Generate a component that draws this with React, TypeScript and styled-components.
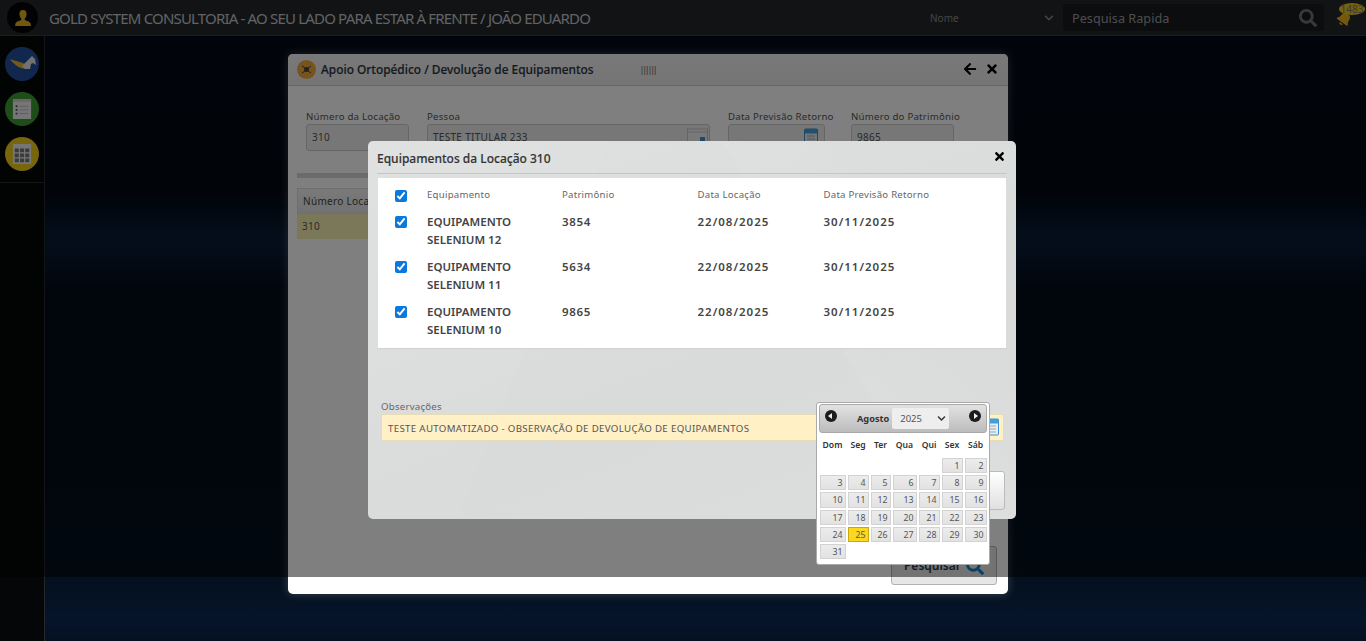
import React from "react";
import styled, { createGlobalStyle } from "styled-components";
import { FaArrowLeft, FaBell, FaChevronDown, FaSearch, FaTimes } from "react-icons/fa";

const Global = createGlobalStyle`
  html, body { margin: 0; padding: 0; background: #02060e; overflow: hidden; }
  * { box-sizing: border-box; }
  body { font-family: "Noto Sans", "Open Sans", sans-serif; }
`;

const Page = styled.div`
  position: relative;
  width: 1366px;
  height: 641px;
  overflow: hidden;
  display: flex;
  flex-direction: column;
  background: linear-gradient(
    180deg,
    #030a16 0px,
    #020812 190px,
    #071c36 240px,
    #030c1a 290px,
    #030c1a 480px,
    #04101e 577px,
    #06142a 620px,
    #051022 641px
  );
`;

const Header = styled.header`
  height: 36px;
  flex: none;
  display: flex;
  align-items: center;
  background: #24262a;
  border-bottom: 1px solid #3a3c40;
  color: #b8bcc0;
`;

const Avatar = styled.div`
  width: 31px;
  height: 31px;
  margin-left: 7px;
  border-radius: 50%;
  background: #050505;
  display: flex;
  align-items: center;
  justify-content: center;
`;

const Brand = styled.div`
  margin-left: 11px;
  font-size: 15px;
  letter-spacing: -0.82px;
  white-space: nowrap;
  color: #c2c6ca;
`;

const SearchType = styled.div`
  margin-left: auto;
  width: 131px;
  display: flex;
  align-items: center;
  justify-content: space-between;
  font-size: 10px;
  color: #8a8e92;
  padding-right: 7px;
  svg { color: #80848a; font-size: 10px; }
`;

const QuickSearch = styled.div`
  width: 261px;
  height: 27px;
  margin-left: 2px;
  border-radius: 3px;
  background: #181a1d;
  display: flex;
  align-items: center;
  justify-content: space-between;
  padding: 0 7px 0 9px;
  font-size: 12.7px;
  color: #989ca0;
  svg { font-size: 18px; color: #6e7276; }
`;

const BellBox = styled.div`
  position: relative;
  width: 42px;
  height: 36px;
  flex: none;
`;

const BellGlyph = styled(FaBell)`
  position: absolute;
  left: 13px;
  top: 11px;
  font-size: 15px;
  color: #e8b020;
  transform: rotate(35deg);
`;

const BellBadge = styled.span`
  position: absolute;
  left: 15px;
  top: 3px;
  width: 26px;
  height: 12px;
  border-radius: 50%;
  background: #e6c41c;
  color: #777;
  font-size: 10px;
  line-height: 12px;
  text-align: center;
  overflow: hidden;
`;

const Body = styled.div`
  flex: 1;
  display: flex;
  min-height: 0;
`;

const Sidebar = styled.nav`
  width: 45px;
  flex: none;
  background: #050607;
  border-right: 1px solid #26282a;
`;

const SideIcons = styled.div`
  display: flex;
  flex-direction: column;
  gap: 11px;
  padding: 11px 0 11px 5px;
  border-bottom: 1px solid #2a2c2e;
  height: 147px;
`;

const SideIcon = styled.div<{ $bg: string }>`
  width: 34px;
  height: 34px;
  border-radius: 50%;
  background: ${(p) => p.$bg};
  display: flex;
  align-items: center;
  justify-content: center;
`;

const Main = styled.main`
  flex: 1;
  padding: 18px 0 0 243px;
`;

const Modal = styled.section`
  position: relative;
  width: 720px;
  height: 540px;
  background: #fff;
  border-radius: 5px;
  box-shadow: 0 0 10px rgba(255, 255, 255, 0.22);
  overflow: hidden;
`;

const ModalHead = styled.div`
  height: 32px;
  display: flex;
  align-items: center;
  padding: 0 9px 1px;
  background: linear-gradient(#f2f2f2, #eaeaea);
  border-bottom: 1px solid #cfcfcf;
`;

const OrthoBadge = styled.div`
  width: 19px;
  height: 19px;
  border-radius: 50%;
  background: #f0a83a;
  display: flex;
  align-items: center;
  justify-content: center;
`;

const ModalTitle = styled.h1`
  margin: 0 0 0 5px;
  font-size: 11.9px;
  font-weight: 500;
  color: #2b3240;
  -webkit-text-stroke: 0.15px #2b3240;
`;

const Bars = styled.span`
  margin-left: 46px;
  font-size: 9px;
  letter-spacing: -2.3px;
  color: #666;
`;

const HeadActions = styled.div`
  margin-left: auto;
  display: flex;
  align-items: center;
  gap: 8px;
  color: #000;
  font-size: 14px;
  svg { display: block; }
`;

const FormRow = styled.div`
  display: flex;
  padding: 24px 0 0 18px;
`;

const Field = styled.div<{ $w: number; $gap: number }>`
  width: ${(p) => p.$w}px;
  margin-right: ${(p) => p.$gap}px;
`;

const FieldLabel = styled.label`
  display: block;
  font-size: 9.7px;
  line-height: 14px;
  letter-spacing: 0.2px;
  color: #555;
  white-space: nowrap;
`;

const FieldBox = styled.div`
  position: relative;
  height: 27px;
  border: 1px solid #ccc;
  border-radius: 3px;
  background: #eee;
  font-size: 10px;
  line-height: 25px;
  letter-spacing: 0.3px;
  padding-left: 5px;
  color: #555;
`;

const FieldIcon = styled.span<{ $right: number }>`
  position: absolute;
  right: ${(p) => p.$right}px;
  top: 3px;
`;

const Divider = styled.div`
  height: 5px;
  margin: 22px 9px 0;
  background: #d6d6d6;
`;

const GridHead = styled.div`
  margin: 10px 0 0 9px;
  height: 26px;
  width: 110px;
  border: 1px solid #ddd;
  background: linear-gradient(#f4f4f4, #e4e4e4);
  font-size: 10px;
  line-height: 24px;
  letter-spacing: 0.3px;
  padding-left: 5px;
  color: #444;
`;

const GridRow = styled.div`
  margin-left: 9px;
  height: 25px;
  width: 640px;
  background: #f6f1b2;
  font-size: 10px;
  line-height: 25px;
  letter-spacing: 0.3px;
  padding-left: 5px;
  color: #555;
`;

const SearchButton = styled.button`
  position: absolute;
  left: 603px;
  top: 492px;
  width: 106px;
  height: 39px;
  border: 1px solid #b0b0b0;
  border-radius: 3px;
  background: #e6e6e6;
  display: flex;
  align-items: center;
  justify-content: center;
  gap: 5px;
  padding-left: 6px;
  font: 600 12px "Noto Sans", sans-serif;
  color: #2a3a50;
  svg { color: #1a7fc8; font-size: 18px; }
`;

const Backdrop = styled.div`
  position: absolute;
  left: 0;
  top: 0;
  width: 100%;
  height: 577px;
  background: rgba(0, 0, 0, 0.5);
`;

const Dialog = styled.section`
  position: absolute;
  left: 368px;
  top: 141px;
  width: 648px;
  height: 378px;
  border-radius: 5px;
  padding: 0 9px 0 9px;
  background:
    linear-gradient(112deg, rgba(255, 255, 255, 0.04) 30%, transparent 30.2%),
    linear-gradient(60deg, transparent 66%, rgba(255, 255, 255, 0.05) 66.2%, transparent 82%),
    linear-gradient(160deg, #dfe1e1, #d9dbdb 60%, #dcdede);
`;

const DialogHead = styled.div`
  height: 33px;
  display: flex;
  align-items: center;
  justify-content: space-between;
  border-bottom: 1px solid #c4c6c6;
  svg { color: #000; font-size: 13px; margin: -2px 1px 0 0; display: block; }
`;

const DialogTitle = styled.h2`
  margin: 2px 0 0;
  font-size: 12px;
  font-weight: 500;
  color: #333;
  -webkit-text-stroke: 0.15px #333;
`;

const Panel = styled.div`
  margin: 4px 1px 0 1px;
  height: 171px;
  background: #fff;
  border-bottom: 1px solid #d0d2d2;
  padding-top: 8px;
`;

const Row = styled.div<{ $head?: boolean }>`
  display: grid;
  grid-template-columns: 49px 135px 135.5px 126px 1fr;
  height: ${(p) => (p.$head ? "27px" : "45px")};
  font-size: ${(p) => (p.$head ? "9.6px" : "11.5px")};
  letter-spacing: ${(p) => (p.$head ? "0.25px" : "0")};
  line-height: 18px;
  font-weight: ${(p) => (p.$head ? 400 : 600)};
  color: ${(p) => (p.$head ? "#666" : "#444")};
`;

const Numeric = styled.span<{ $spacing: number }>`
  letter-spacing: ${(p) => p.$spacing}px;
`;

const CheckCell = styled.div<{ $head?: boolean }>`
  padding: ${(p) => (p.$head ? "4px" : "3px")} 0 0 17px;
  input {
    display: block;
    margin: 0;
    width: 12px;
    height: 12px;
    accent-color: #0a78dc;
  }
`;

const ObsBlock = styled.div`
  margin: 51px 3px 0 4px;
`;

const ObsLabel = styled.label`
  display: block;
  font-size: 9.7px;
  line-height: 14px;
  letter-spacing: 0.2px;
  color: #666;
`;

const ObsInput = styled.div`
  height: 27px;
  border: 1px solid #e6dcb8;
  border-radius: 2px;
  background: #fff0c6;
  font-size: 9.7px;
  line-height: 27px;
  letter-spacing: 0.33px;
  padding-left: 6px;
  color: #555;
`;

const ConfirmButton = styled.div`
  position: absolute;
  left: 540px;
  top: 330px;
  width: 97px;
  height: 39px;
  border: 1px solid #bbb;
  border-radius: 3px;
  background: linear-gradient(#fff, #e0e0e0);
`;

const ObsCalendar = styled.span`
  position: absolute;
  left: 617px;
  top: 277px;
`;

const Picker = styled.div`
  position: absolute;
  left: 816px;
  top: 402px;
  width: 174px;
  height: 163px;
  background: #fff;
  border: 1px solid #aaa;
  border-radius: 3px;
  padding: 1px 2px;
`;

const PickerHead = styled.div`
  position: relative;
  height: 29px;
  border: 1px solid #aaa;
  border-radius: 3px;
  background: linear-gradient(#e2e2e2, #bcbcbc);
  display: flex;
  align-items: center;
  padding-left: 37px;
  gap: 3px;
  font-size: 9.2px;
  font-weight: 700;
  color: #333;
`;

const NavDot = styled.span<{ $side: "left" | "right" }>`
  position: absolute;
  top: 5px;
  ${(p) => p.$side}: 5px;
  width: 12px;
  height: 12px;
  border-radius: 50%;
  background: #1c1c1c;
  &::after {
    content: "";
    position: absolute;
    top: 3px;
    left: ${(p) => (p.$side === "left" ? "3px" : "5px")};
    border: 3px solid transparent;
    border-left: ${(p) => (p.$side === "right" ? "4px solid #eee" : "0")};
    border-right: ${(p) => (p.$side === "left" ? "4px solid #eee" : "0")};
  }
`;

const YearSelect = styled.div`
  width: 57px;
  height: 21px;
  border-radius: 2px;
  background: #eee;
  display: flex;
  align-items: center;
  justify-content: space-between;
  padding: 0 3px 0 8px;
  font-size: 9.5px;
  font-weight: 400;
  color: #555;
  svg { font-size: 9px; color: #333; }
`;

const WeekRow = styled.div`
  display: grid;
  grid-template-columns: 26px 21px 20px 24px 21px 21px 22px;
  column-gap: 2px;
  height: 25px;
  padding-bottom: 2px;
  align-items: center;
  margin-left: 0.5px;
  font-size: 8.6px;
  font-weight: 600;
  color: #333;
  text-align: center;
`;

const DayGrid = styled.div`
  display: grid;
  grid-template-columns: 26px 21px 20px 24px 21px 21px 22px;
  grid-auto-rows: 15.2px;
  gap: 2px;
  margin-left: 0.5px;
`;

const Day = styled.span<{ $active?: boolean }>`
  border: 1px solid ${(p) => (p.$active ? "#c8a80c" : "#d3d3d3")};
  background: ${(p) => (p.$active ? "#fbd71e" : "linear-gradient(#ececec, #e2e2e2)")};
  font-size: 8.8px;
  line-height: 14px;
  text-align: right;
  padding-right: 2px;
  color: #555;
`;

const rows = [
  ["EQUIPAMENTO SELENIUM 12", "3854"],
  ["EQUIPAMENTO SELENIUM 11", "5634"],
  ["EQUIPAMENTO SELENIUM 10", "9865"],
];

const weekDays = ["Dom", "Seg", "Ter", "Qua", "Qui", "Sex", "Sáb"];

const CalendarGlyph = () => (
  <svg width="14" height="18" viewBox="0 0 14 18">
    <rect x="0.5" y="1" width="13" height="16" rx="1" fill="#e8eef2" stroke="#3b8fc8" />
    <rect x="0.5" y="1" width="13" height="4.5" fill="#3fa0dc" />
    <path d="M3 8h8M3 11h8M3 14h8" stroke="#9aa8b0" />
  </svg>
);

const LookupGlyph = () => (
  <svg width="21" height="18" viewBox="0 0 21 18">
    <rect x="0.5" y="1" width="20" height="16" fill="#f2f2f2" stroke="#c8c8c8" />
    <path d="M1 4h19" stroke="#c8c8c8" />
    <rect x="13" y="9" width="5" height="5" fill="#3f8fd0" />
  </svg>
);

const App: React.FC = () => {
  const firstOffset = 5;

  return (
    <Page>
      <Global />
      <Header>
        <Avatar>
          <svg width="16" height="18" viewBox="0 0 18 20">
            <path
              d="M9 1c3 0 4.200 2.400 4 5-.2 2-1 3.600-2 4.600v1.600c2.500 1 5.600 1.800 6.400 3.600.3.800.4 2 .4 3.200H.2c0-1.200.1-2.400.4-3.200.8-1.800 3.900-2.600 6.400-3.600v-1.600C6 9.600 5.200 8 5 6c-.2-2.600 1-5 4-5z"
              fill="#e3b023"
            />
          </svg>
        </Avatar>
        <Brand>GOLD SYSTEM CONSULTORIA - AO SEU LADO PARA ESTAR À FRENTE / JOÃO EDUARDO</Brand>
        <SearchType>
          <span>Nome</span>
          <FaChevronDown />
        </SearchType>
        <QuickSearch>
          <span>Pesquisa Rapida</span>
          <FaSearch />
        </QuickSearch>
        <BellBox>
          <BellGlyph />
          <BellBadge>1483</BellBadge>
        </BellBox>
      </Header>
      <Body>
        <Sidebar>
          <SideIcons>
            <SideIcon $bg="#244f9c">
              <svg width="34" height="34" viewBox="0 0 34 34">
                <path d="M5 12c5 2 12 3 19 7l-2 3c-7 0-13-4-17-10z" fill="#e8b42e" />
                <path d="M17 19l7-7 3-3 3 3 1 6-3-2-2 1-1 5-5 0z" fill="#e4e4e4" />
              </svg>
            </SideIcon>
            <SideIcon $bg="#3f9a34">
              <svg width="20" height="20" viewBox="0 0 20 22">
                <rect width="20" height="22" fill="#ededed" />
                <rect width="20" height="3" fill="#cfcfcf" />
                <path d="M3 7h2v2H3zM3 11h2v2H3zM3 15h2v2H3z" fill="#555" />
                <path d="M7 8h10M7 12h10M7 16h10" stroke="#bbb" />
              </svg>
            </SideIcon>
            <SideIcon $bg="#f0cc1c">
              <svg width="20" height="20" viewBox="0 0 20 22">
                <rect width="20" height="22" fill="#ededed" />
                <path
                  d="M2 5h4.500v4H2zM7.800 5h4.500v4H7.800zM13.500 5H18v4h-4.500zM2 10.500h4.500v4H2zM7.800 10.500h4.500v4H7.800zM13.500 10.500H18v4h-4.500zM2 16h4.500v4H2zM7.800 16h4.500v4H7.800zM13.500 16H18v4h-4.500z"
                  fill="#777"
                />
              </svg>
            </SideIcon>
          </SideIcons>
        </Sidebar>
        <Main>
          <Modal>
            <ModalHead>
              <OrthoBadge>
                <svg width="11" height="11" viewBox="0 0 11 11">
                  <circle cx="5.500" cy="5.500" r="2.500" fill="#444" />
                  <path d="M1 2l3 2M10 2L7 4M1 9l3-2M10 9L7 7" stroke="#444" />
                </svg>
              </OrthoBadge>
              <ModalTitle>Apoio Ortopédico / Devolução de Equipamentos</ModalTitle>
              <Bars>||||||</Bars>
              <HeadActions>
                <FaArrowLeft />
                <FaTimes />
              </HeadActions>
            </ModalHead>
            <FormRow>
              <Field $w={103} $gap={18}>
                <FieldLabel>Número da Locação</FieldLabel>
                <FieldBox>310</FieldBox>
              </Field>
              <Field $w={283} $gap={18}>
                <FieldLabel>Pessoa</FieldLabel>
                <FieldBox>
                  TESTE TITULAR 233
                  <FieldIcon $right={1}>
                    <LookupGlyph />
                  </FieldIcon>
                </FieldBox>
              </Field>
              <Field $w={97} $gap={26}>
                <FieldLabel>Data Previsão Retorno</FieldLabel>
                <FieldBox>
                  <FieldIcon $right={6}>
                    <CalendarGlyph />
                  </FieldIcon>
                </FieldBox>
              </Field>
              <Field $w={103} $gap={0}>
                <FieldLabel>Número do Patrimônio</FieldLabel>
                <FieldBox>9865</FieldBox>
              </Field>
            </FormRow>
            <Divider />
            <GridHead>Número Locação</GridHead>
            <GridRow>310</GridRow>
            <SearchButton>
              Pesquisar
              <FaSearch />
            </SearchButton>
          </Modal>
        </Main>
      </Body>
      <Backdrop />
      <Dialog>
        <DialogHead>
          <DialogTitle>Equipamentos da Locação 310</DialogTitle>
          <FaTimes />
        </DialogHead>
        <Panel>
          <Row $head>
            <CheckCell $head>
              <input type="checkbox" defaultChecked />
            </CheckCell>
            <span>Equipamento</span>
            <span>Patrimônio</span>
            <span>Data Locação</span>
            <span>Data Previsão Retorno</span>
          </Row>
          {rows.map(([name, code]) => (
            <Row key={code}>
              <CheckCell>
                <input type="checkbox" defaultChecked />
              </CheckCell>
              <span>{name}</span>
              <Numeric $spacing={0.7}>{code}</Numeric>
              <Numeric $spacing={1}>22/08/2025</Numeric>
              <Numeric $spacing={1}>30/11/2025</Numeric>
            </Row>
          ))}
        </Panel>
        <ObsBlock>
          <ObsLabel>Observações</ObsLabel>
          <ObsInput>TESTE AUTOMATIZADO - OBSERVAÇÃO DE DEVOLUÇÃO DE EQUIPAMENTOS</ObsInput>
        </ObsBlock>
        <ObsCalendar>
          <CalendarGlyph />
        </ObsCalendar>
        <ConfirmButton />
      </Dialog>
      <Picker>
        <PickerHead>
          <NavDot $side="left" />
          <span>Agosto</span>
          <YearSelect>
            2025
            <FaChevronDown />
          </YearSelect>
          <NavDot $side="right" />
        </PickerHead>
        <WeekRow>
          {weekDays.map((d) => (
            <span key={d}>{d}</span>
          ))}
        </WeekRow>
        <DayGrid>
          {Array.from({ length: firstOffset }, (_, i) => (
            <span key={`gap-${i}`} />
          ))}
          {Array.from({ length: 31 }, (_, i) => (
            <Day key={i} $active={i + 1 === 25}>
              {i + 1}
            </Day>
          ))}
        </DayGrid>
      </Picker>
    </Page>
  );
};

export default App;
